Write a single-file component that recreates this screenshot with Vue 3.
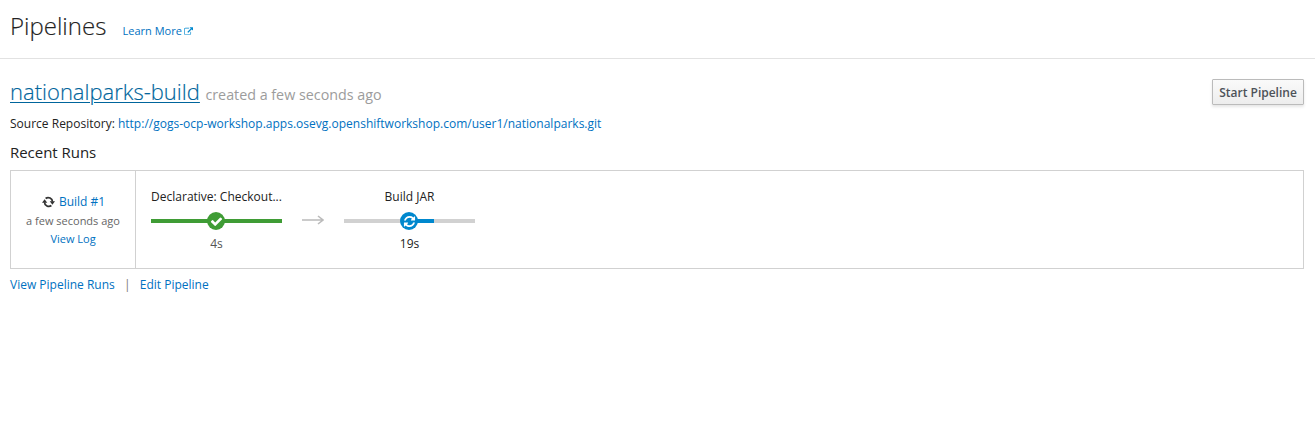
<script setup>
const stages = [
  { name: 'Declarative: Checkout...', time: '4s', state: 'done', progress: 100 },
  { name: 'Build JAR', time: '19s', state: 'active', progress: 69 },
]
</script>

<template>
  <div class="page">
    <header class="head">
      <h1>Pipelines</h1>
      <a class="learn">Learn More<svg class="ext" viewBox="0 0 1792 1536"><path d="M1408 928v320q0 119-84.5 203.5t-203.5 84.5h-832q-119 0-203.5-84.5t-84.5-203.5v-832q0-119 84.5-203.5t203.5-84.5h704q14 0 23 9t9 23v64q0 14-9 23t-23 9h-704q-66 0-113 47t-47 113v832q0 66 47 113t113 47h832q66 0 113-47t47-113v-320q0-14 9-23t23-9h64q14 0 23 9t9 23zm384-864v512q0 26-19 45t-45 19-45-19l-176-176-652 652q-10 10-23 10t-23-10l-114-114q-10-10-10-23t10-23l652-652-176-176q-19-19-19-45t19-45 45-19h512q26 0 45 19t19 45z" /></svg></a>
    </header>
    <main>
      <div class="title">
        <h2><a>nationalparks-build</a><small>created a few seconds ago</small></h2>
        <button>Start Pipeline</button>
      </div>
      <p class="source"><span>Source Repository: </span><a>http://gogs-ocp-workshop.apps.osevg.openshiftworkshop.com/user1/nationalparks.git</a></p>
      <h3>Recent Runs</h3>
      <section class="run">
        <div class="summary">
          <div class="build">
            <svg class="spin" viewBox="0 0 13 12">
              <path class="arc" d="M3.6 2.5 A4.3 4.3 0 0 1 10.5 5.8 M9.4 9.5 A4.3 4.3 0 0 1 2.5 6.2" />
              <path d="M7.7 5.3H13L10.4 8.7Z M0 6.7H5.3L2.6 3.3Z" />
            </svg>
            <a>Build #1</a>
          </div>
          <div class="ago">a few seconds ago</div>
          <a class="log">View Log</a>
        </div>
        <div class="stages">
          <template v-for="(s, i) in stages" :key="s.name">
            <svg v-if="i" class="arrow" viewBox="0 0 22 10"><path d="M0 5H20.5M16 1L21 5L16 9" /></svg>
            <div class="stage" :class="s.state">
              <div class="name">{{ s.name }}</div>
              <div class="track">
                <div class="fill" :style="{ width: s.progress + '%' }"></div>
                <span class="dot">
                  <svg v-if="s.state === 'done'" viewBox="0 0 1792 1792"><path d="M1671 566q0 40-28 68l-724 724-136 136q-28 28-68 28t-68-28l-136-136-362-362q-28-28-28-68t28-68l136-136q28-28 68-28t68 28l294 295 656-657q28-28 68-28t68 28l136 136q28 28 28 68z" /></svg>
                  <svg v-else viewBox="0 0 1792 1792"><path d="M1639 1056q0 5-1 7-64 268-268 434.5t-478 166.5q-146 0-282.5-55t-243.5-157l-129 129q-19 19-45 19t-45-19-19-45v-448q0-26 19-45t45-19h448q26 0 45 19t19 45-19 45l-137 137q71 66 161 102t187 36q134 0 250-65t186-179q11-17 53-117 8-23 30-23h192q13 0 22.5 9.5t9.5 22.5zm25-800v448q0 26-19 45t-45 19h-448q-26 0-45-19t-19-45 19-45l138-138q-148-137-349-137-134 0-250 65t-186 179q-11 17-53 117-8 23-30 23h-199q-13 0-22.5-9.5t-9.5-22.5v-7q65-268 270-434.5t480-166.5q146 0 284 55.5t245 156.5l130-129q19-19 45-19t45 19 19 45z" /></svg>
                </span>
              </div>
              <div class="time">{{ s.time }}</div>
            </div>
          </template>
        </div>
      </section>
      <nav><a>View Pipeline Runs</a><i>|</i><a>Edit Pipeline</a></nav>
    </main>
  </div>
</template>

<style>
body { background: #fff; }
</style>

<style scoped>
.page { font: 12px/20px "Open Sans", sans-serif; color: #222; height: 433px; overflow: hidden; white-space: nowrap; }
.page * { box-sizing: border-box; }
h1, h2, h3, p { margin: 0; font-weight: 400; }
a { color: #0071c1; }
svg { display: block; flex: none; }
.head { height: 59px; border-bottom: 1px solid #e2e2e2; padding: 9px 10px 0; display: flex; align-items: flex-start; }
h1 { font-size: 24px; line-height: 33px; font-weight: 300; color: #222; width: 112.5px; -webkit-text-stroke: .15px #222; }
.learn { font-size: 11px; line-height: 20px; margin-top: 12px; display: flex; align-items: center; }
.ext { width: 9px; height: 8px; margin: 0 0 0 2px; fill: #0088ce; }
main { padding: 0 11px 0 10px; }
.title { display: flex; justify-content: space-between; align-items: flex-start; height: 54px; padding-top: 16px; }
h2 { font-size: 22px; line-height: 32px; font-weight: 300; display: flex; align-items: baseline; }
h2 a { color: #00659c; -webkit-text-stroke: .15px #00659c; text-decoration: underline; text-decoration-thickness: 1px; text-underline-offset: 2px; }
small { font-size: 14.3px; font-weight: 400; color: #9c9c9c; margin-left: 5.5px; }
button { width: 92px; height: 26px; margin-top: 4px; padding: 1px 0 0; font: 600 12px/20px "Open Sans", sans-serif; color: #4d5258; border: 1px solid #bbb; border-radius: 1px; background: linear-gradient(#fafafa, #ededed); box-shadow: 0 2px 3px rgba(3, 3, 3, .1); }
.source { height: 29px; line-height: 22px; letter-spacing: .007px; }
h3 { font-size: 15px; line-height: 20px; height: 28px; letter-spacing: -.03px; }
.run { height: 99px; border: 1px solid #d1d1d1; display: flex; }
.summary { width: 125px; border-right: 1px solid #d1d1d1; text-align: center; padding: 21px 0 0; }
.build { display: flex; justify-content: center; align-items: center; height: 20px; gap: 4px; padding-left: 1px; }
.spin { width: 13px; height: 12px; fill: #333; }
.arc { fill: none; stroke: #333; stroke-width: 1.8; }
.ago { font-size: 11px; line-height: 18px; color: #666; }
.log { font-size: 11px; line-height: 18px; display: block; }
.stages { display: flex; padding: 15px 0 0 15px; }
.stage { width: 131px; text-align: center; }
.name { line-height: 20px; height: 33px; padding-top: 1px; }
.track { position: relative; height: 4px; background: #d1d1d1; margin-bottom: 11px; }
.fill { height: 4px; background: #0088ce; }
.active .fill { background: linear-gradient(90deg, #d1d1d1 65px, #0088ce 65px); }
.done .fill { background: #3f9c35; }
.dot { position: absolute; left: 56px; top: -7px; width: 18px; height: 18px; border-radius: 50%; background: #0088ce; display: flex; align-items: center; justify-content: center; }
.done .dot { background: #3f9c35; }
.dot svg { width: 13px; height: 13px; fill: #fff; }
.time { line-height: 20px; }
.done .time { color: #555; }
.arrow { width: 22px; height: 10px; margin: 29px 20px 0; fill: none; stroke: #bbb; stroke-width: 1.6; }
nav { display: flex; line-height: 20px; margin-top: 6px; }
nav i { font-style: normal; width: 25px; text-align: center; color: #777; }
</style>
